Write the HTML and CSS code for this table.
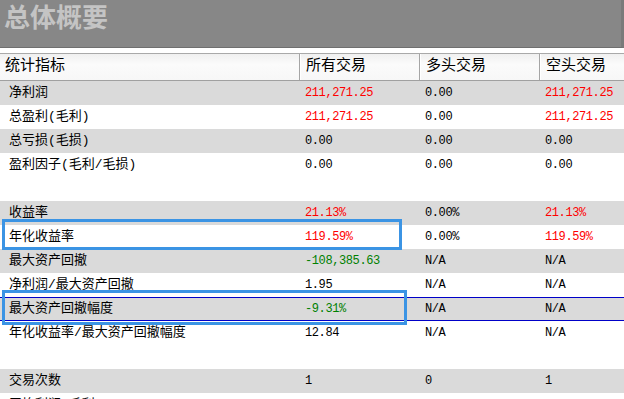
FILE: index.html
```html
<!DOCTYPE html>
<html lang="zh-CN">
<head>
<meta charset="utf-8">
<title>总体概要</title>
<link rel="stylesheet" href="styles.css">
</head>
<body>
<div class="page">
  <div class="titlebar"><span class="title">总体概要</span></div>
  <div class="grid">
    <div class="row head">
      <div class="cell">统计指标</div>
      <div class="cell">所有交易</div>
      <div class="cell">多头交易</div>
      <div class="cell">空头交易</div>
    </div>
    <div class="row gray">
      <div class="cell">净利润</div>
      <div class="cell red">211,271.25</div>
      <div class="cell">0.00</div>
      <div class="cell red">211,271.25</div>
    </div>
    <div class="row">
      <div class="cell">总盈利(毛利)</div>
      <div class="cell red">211,271.25</div>
      <div class="cell">0.00</div>
      <div class="cell red">211,271.25</div>
    </div>
    <div class="row gray">
      <div class="cell">总亏损(毛损)</div>
      <div class="cell">0.00</div>
      <div class="cell">0.00</div>
      <div class="cell">0.00</div>
    </div>
    <div class="row">
      <div class="cell">盈利因子(毛利/毛损)</div>
      <div class="cell">0.00</div>
      <div class="cell">0.00</div>
      <div class="cell">0.00</div>
    </div>
    <div class="row spacer"></div>
    <div class="row gray">
      <div class="cell">收益率</div>
      <div class="cell red">21.13%</div>
      <div class="cell">0.00%</div>
      <div class="cell red">21.13%</div>
    </div>
    <div class="row">
      <div class="cell">年化收益率</div>
      <div class="cell red">119.59%</div>
      <div class="cell">0.00%</div>
      <div class="cell red">119.59%</div>
    </div>
    <div class="row gray">
      <div class="cell">最大资产回撤</div>
      <div class="cell green">-108,385.63</div>
      <div class="cell">N/A</div>
      <div class="cell">N/A</div>
    </div>
    <div class="row">
      <div class="cell">净利润/最大资产回撤</div>
      <div class="cell">1.95</div>
      <div class="cell">N/A</div>
      <div class="cell">N/A</div>
    </div>
    <div class="row gray selected">
      <div class="cell">最大资产回撤幅度</div>
      <div class="cell green">-9.31%</div>
      <div class="cell">N/A</div>
      <div class="cell">N/A</div>
    </div>
    <div class="row">
      <div class="cell">年化收益率/最大资产回撤幅度</div>
      <div class="cell">12.84</div>
      <div class="cell">N/A</div>
      <div class="cell">N/A</div>
    </div>
    <div class="row spacer"></div>
    <div class="row gray">
      <div class="cell">交易次数</div>
      <div class="cell">1</div>
      <div class="cell">0</div>
      <div class="cell">1</div>
    </div>
    <div class="row">
      <div class="cell">平均利润(毛利)</div>
      <div class="cell">211,271.25</div>
      <div class="cell">0.00</div>
      <div class="cell">211,271.25</div>
    </div>
  </div>
  <div class="mark mark-a"></div>
  <div class="mark mark-b"></div>
</div>
</body>
</html>
```

FILE: styles.css
```css
html, body {
  margin: 0;
  padding: 0;
  background: #ffffff;
}

.page {
  position: relative;
  width: 624px;
  height: 399px;
  overflow: hidden;
  font-family: "Liberation Mono", "Noto Sans CJK SC", monospace;
  color: #000000;
}

.titlebar {
  height: 47px;
  background: #878787;
  border-bottom: 1px solid #6f6f6f;
  border-right: 3px solid #7a7a7a;
  box-sizing: content-box;
  display: flex;
  align-items: flex-start;
  padding-left: 4px;
}

.title {
  font-family: "Noto Sans CJK SC", sans-serif;
  font-weight: 700;
  font-size: 26px;
  line-height: 32px;
  color: #c4c4c4;
}

.grid {
  margin-top: 5px;
  display: flex;
  flex-direction: column;
}

.row {
  display: grid;
  grid-template-columns: 299px 120px 120px 1fr;
  height: 24px;
  align-items: center;
  font-size: 13px;
  box-sizing: border-box;
}

.row.gray {
  background: #dadada;
}

.row.spacer {
  height: 24px;
}

.row.selected {
  border-top: 1px solid #0000c8;
  border-bottom: 1px solid #0000c8;
}

.cell {
  white-space: nowrap;
  padding-left: 6px;
  line-height: 22px;
  letter-spacing: -0.4px;
  font-size: 12px;
}

.cell:first-child {
  padding-left: 9px;
  font-size: 13px;
  letter-spacing: 0;
}

.head {
  height: 28px;
  border-top: 1px solid #a9a9a9;
  border-bottom: 1px solid #a0a0a0;
  background: linear-gradient(#f0f0f0, #fbfbfb 40%, #f7f7f7);
  align-items: stretch;
}

.head .cell {
  font-size: 15px;
  letter-spacing: 0;
  line-height: 26px;
  padding-left: 6px;
  border-left: 1px solid #a5a5a5;
  box-shadow: inset 1px 0 0 #ffffff;
}

.head .cell:first-child {
  padding-left: 5px;
  border-left: none;
  box-shadow: none;
}

.red {
  color: #ff0000;
}

.green {
  color: #008000;
}

.mark {
  position: absolute;
  border: 3px solid #3b94e4;
  box-sizing: border-box;
}

.mark-a {
  left: 2px;
  top: 219px;
  width: 400px;
  height: 31px;
}

.mark-b {
  left: 2px;
  top: 290px;
  width: 405px;
  height: 35px;
}
```
